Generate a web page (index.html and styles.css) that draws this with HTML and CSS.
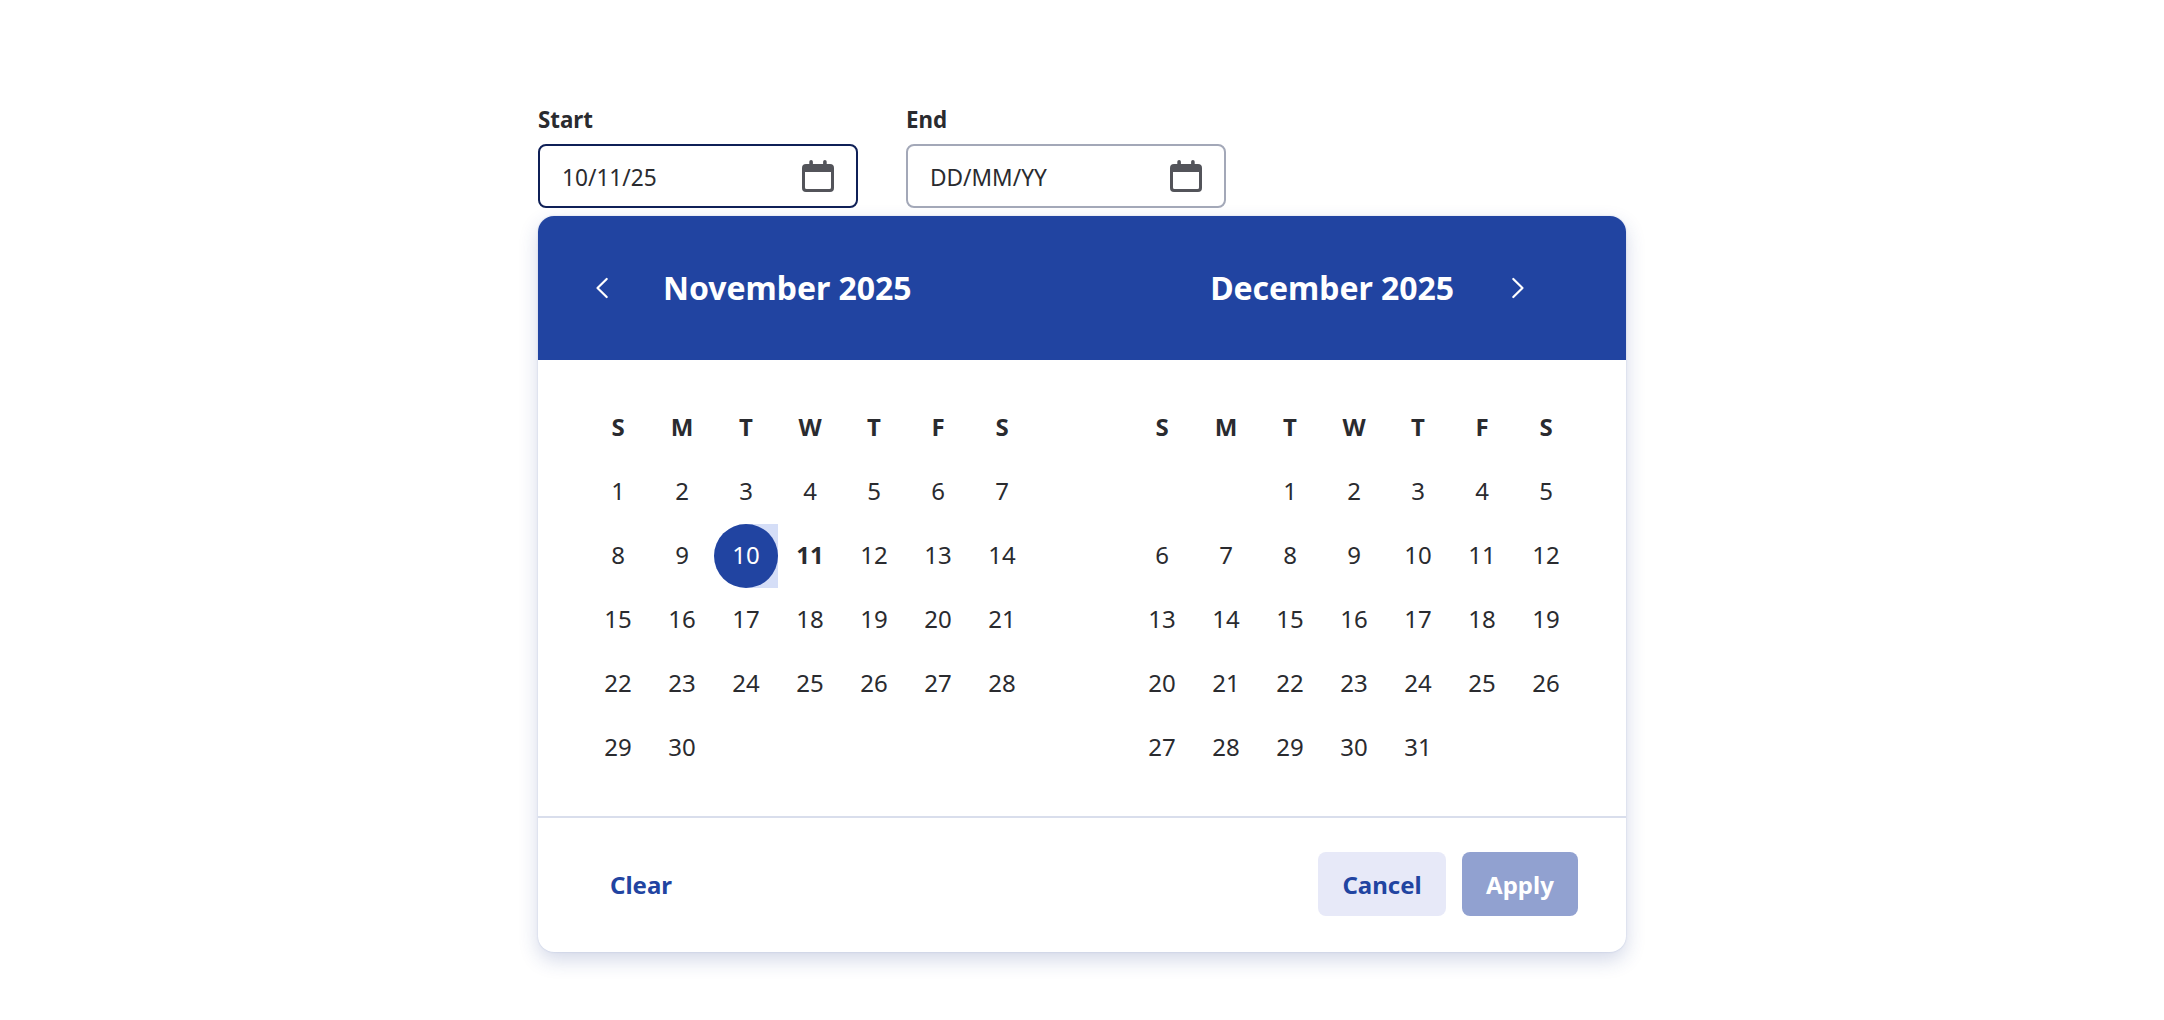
FILE: index.html
```html
<!DOCTYPE html>
<html lang="en">
<head>
    <meta charset="UTF-8">
    <meta name="viewport" content="width=device-width, initial-scale=1.0">
    <title>Date range picker</title>
    <link rel="stylesheet" href="styles.css">
</head>
<body>
    <div class="container">
        <div class="fields">
            <div class="field">
                <label class="label">Start</label>
                <div class="input active">
                    <span class="value">10/11/25</span>
                    <svg class="icon" width="32" height="32" viewBox="0 0 32 32">
                        <path fill="#53545a" fill-rule="evenodd" d="M7.3 4V1.8a1.8 1.8 0 0 1 3.6 0V4h10.2V1.8a1.8 1.8 0 0 1 3.6 0V4H28a4 4 0 0 1 4 4v20a4 4 0 0 1-4 4H4a4 4 0 0 1-4-4V8a4 4 0 0 1 4-4zM3 12v15.5A1.5 1.5 0 0 0 4.5 29h23a1.5 1.5 0 0 0 1.5-1.5V12z"/>
                    </svg>
                </div>
            </div>
            <div class="field">
                <label class="label">End</label>
                <div class="input">
                    <span class="value">DD/MM/YY</span>
                    <svg class="icon" width="32" height="32" viewBox="0 0 32 32">
                        <path fill="#53545a" fill-rule="evenodd" d="M7.3 4V1.8a1.8 1.8 0 0 1 3.6 0V4h10.2V1.8a1.8 1.8 0 0 1 3.6 0V4H28a4 4 0 0 1 4 4v20a4 4 0 0 1-4 4H4a4 4 0 0 1-4-4V8a4 4 0 0 1 4-4zM3 12v15.5A1.5 1.5 0 0 0 4.5 29h23a1.5 1.5 0 0 0 1.5-1.5V12z"/>
                    </svg>
                </div>
            </div>
        </div>

        <div class="panel">
            <div class="header">
                <div class="prev">
                    <svg class="arrow" width="32" height="32" viewBox="0 0 32 32"><path d="M20.7 7 11.5 16l9.2 9"/></svg>
                    <span class="title">November 2025</span>
                </div>
                <div class="next">
                    <span class="title">December 2025</span>
                    <svg class="arrow" width="32" height="32" viewBox="0 0 32 32"><path d="M11.3 7l9.2 9-9.2 9"/></svg>
                </div>
            </div>

            <div class="months">
                <table>
                    <thead>
                        <tr><th>S</th><th>M</th><th>T</th><th>W</th><th>T</th><th>F</th><th>S</th></tr>
                    </thead>
                    <tbody>
                        <tr><td>1</td><td>2</td><td>3</td><td>4</td><td>5</td><td>6</td><td>7</td></tr>
                        <tr><td>8</td><td>9</td><td class="range-start"><span class="selected">10</span></td><td class="today">11</td><td>12</td><td>13</td><td>14</td></tr>
                        <tr><td>15</td><td>16</td><td>17</td><td>18</td><td>19</td><td>20</td><td>21</td></tr>
                        <tr><td>22</td><td>23</td><td>24</td><td>25</td><td>26</td><td>27</td><td>28</td></tr>
                        <tr><td>29</td><td>30</td><td></td><td></td><td></td><td></td><td></td></tr>
                    </tbody>
                </table>
                <table>
                    <thead>
                        <tr><th>S</th><th>M</th><th>T</th><th>W</th><th>T</th><th>F</th><th>S</th></tr>
                    </thead>
                    <tbody>
                        <tr><td></td><td></td><td>1</td><td>2</td><td>3</td><td>4</td><td>5</td></tr>
                        <tr><td>6</td><td>7</td><td>8</td><td>9</td><td>10</td><td>11</td><td>12</td></tr>
                        <tr><td>13</td><td>14</td><td>15</td><td>16</td><td>17</td><td>18</td><td>19</td></tr>
                        <tr><td>20</td><td>21</td><td>22</td><td>23</td><td>24</td><td>25</td><td>26</td></tr>
                        <tr><td>27</td><td>28</td><td>29</td><td>30</td><td>31</td><td></td><td></td></tr>
                    </tbody>
                </table>
            </div>

            <div class="footer">
                <button class="btn clear">Clear</button>
                <button class="btn cancel">Cancel</button>
                <button class="btn apply">Apply</button>
            </div>
        </div>
    </div>
</body>
</html>
```
FILE: styles.css
```css
* {
    box-sizing: border-box;
}
body {
    margin: 0;
    min-height: 100vh;
    background-color: #fff;
    color: #2a2b2f;
    font-family: "Noto Sans", "Open Sans", sans-serif;
    font-size: 24px;
}
.container {
    width: 1088px;
    margin: 0 auto;
    padding: 102px 0 68px;
}
.fields {
    display: flex;
    gap: 48px;
    margin-bottom: 8px;
}
.field {
    width: 320px;
}
.label {
    display: block;
    height: 42px;
    line-height: 33px;
    font-weight: 700;
    transform: scaleX(0.93);
    transform-origin: left;
}
.input {
    display: flex;
    align-items: center;
    justify-content: space-between;
    height: 64px;
    padding: 0 22px;
    border: 2px solid #a3a8b8;
    border-radius: 8px;
}
.input.active {
    border-color: #0f2057;
}
.value {
    transform: scaleX(0.945);
    transform-origin: left;
}
.panel {
    border-radius: 16px;
    background-color: #fff;
    box-shadow: 0 0 2px rgba(33, 68, 161, 0.2), 0 8px 20px rgba(33, 58, 140, 0.2);
}
.header {
    display: flex;
    justify-content: space-between;
    height: 144px;
    padding: 0 92px 0 48px;
    border-radius: 16px 16px 0 0;
    background-color: #2144a1;
    color: #fff;
}
.prev, .next {
    display: flex;
    align-items: center;
    gap: 45px;
}
.next {
    gap: 48px;
}
.title {
    padding-bottom: 2px;
    font-size: 32px;
    font-weight: 700;
    letter-spacing: -0.05px;
}
.arrow {
    fill: none;
    stroke: #fff;
    stroke-width: 2.2;
    stroke-linecap: round;
    stroke-linejoin: round;
}
.months {
    display: flex;
    justify-content: space-between;
    padding: 36px 48px;
    border-bottom: 2px solid #d9deec;
}
table {
    width: 448px;
    table-layout: fixed;
    border-collapse: collapse;
}
th, td {
    height: 64px;
    padding: 0;
    text-align: center;
    vertical-align: top;
    line-height: 62px;
}
th, .today {
    font-weight: 700;
}
.range-start {
    background: linear-gradient(to right, #fff 50%, #d5def7 50%);
}
.selected {
    display: block;
    height: 64px;
    border-radius: 50%;
    background-color: #2144a1;
    color: #fff;
}
.footer {
    display: flex;
    gap: 16px;
    height: 134px;
    padding: 34px 48px 36px;
}
.btn {
    height: 64px;
    padding: 0;
    border: none;
    border-radius: 8px;
    font-family: inherit;
    font-size: 24px;
    font-weight: 700;
    cursor: pointer;
}
.clear {
    width: 110px;
    margin-right: auto;
    background: none;
    color: #2144a1;
}
.cancel {
    width: 128px;
    background-color: #e7e9f8;
    color: #2144a1;
}
.apply {
    width: 116px;
    background-color: #91a1d0;
    color: #fff;
}
```
